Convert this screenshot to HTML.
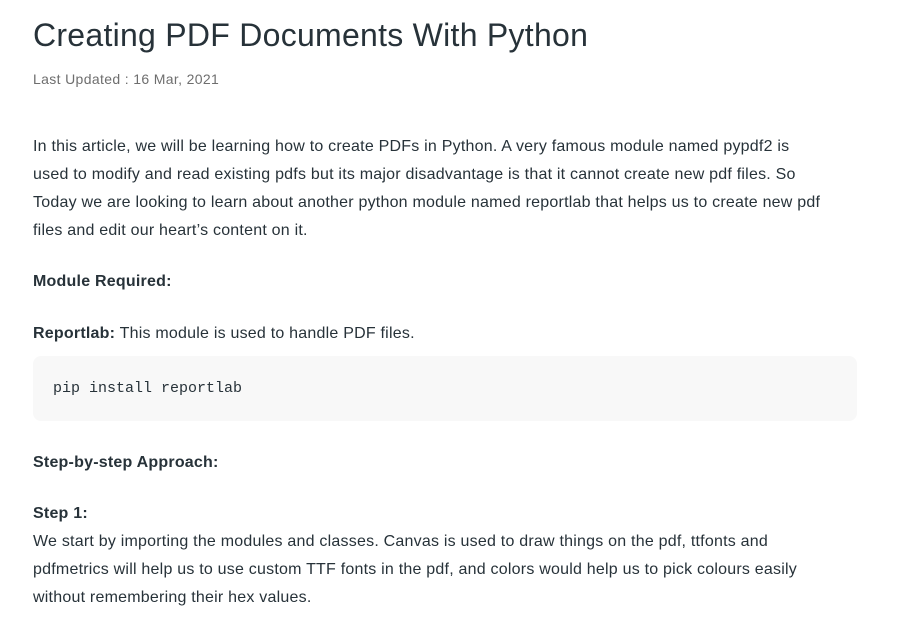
<!DOCTYPE html>
<html><head><meta charset="utf-8"><style>
body{margin:0;background:#fff;width:921px;height:634px;overflow:hidden;font-family:"Liberation Sans",sans-serif;color:#273239;}
.a{position:absolute;left:33px;white-space:nowrap;}
h1{position:absolute;left:33px;top:17px;margin:0;font-size:32px;font-weight:normal;color:#273239;letter-spacing:0.27px;}
.m{top:71px;font-size:14px;color:#6e6e6e;letter-spacing:0.35px;}
.p{font-size:16px;line-height:28px;letter-spacing:0.22px;}
b{font-weight:bold;}
.code{position:absolute;left:33px;top:356px;width:824px;height:65px;background:#f8f8f8;border-radius:8px;}
.code span{position:absolute;left:20px;top:24px;font-family:"Liberation Mono",monospace;font-size:15px;color:#273239;}
</style></head><body>
<h1>Creating PDF Documents With Python</h1>
<div class="a m">Last Updated : 16 Mar, 2021</div>
<div class="a p" style="top:133px">In this article, we will be learning how to create PDFs in Python. A very famous module named pypdf2 is<br>used to modify and read existing pdfs but its major disadvantage is that it cannot create new pdf files. So<br>Today we are looking to learn about another python module named reportlab that helps us to create new pdf<br>files and edit our heart’s content on it.</div>
<div class="a p" style="top:268px"><b>Module Required:</b></div>
<div class="a p" style="top:320px"><b>Reportlab:</b> This module is used to handle PDF files.</div>
<div class="code"><span>pip install reportlab</span></div>
<div class="a p" style="top:449px"><b>Step-by-step Approach:</b></div>
<div class="a p" style="top:500px"><b>Step 1:</b><br>We start by importing the modules and classes. Canvas is used to draw things on the pdf, ttfonts and<br>pdfmetrics will help us to use custom TTF fonts in the pdf, and colors would help us to pick colours easily<br>without remembering their hex values.</div>
</body></html>
